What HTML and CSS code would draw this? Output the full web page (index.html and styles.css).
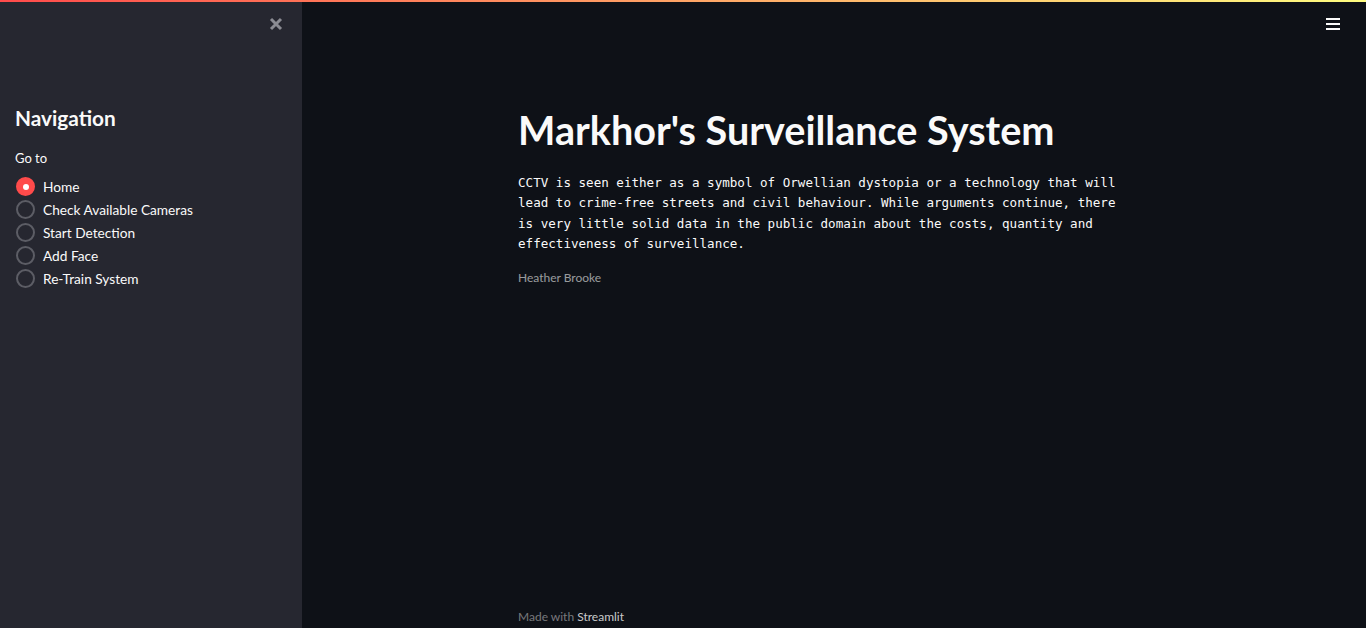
FILE: index.html
```html
<!DOCTYPE html>
<html>
<head>
<meta charset="utf-8">
<link rel="stylesheet" href="styles.css">
</head>
<body>
<div class="decoration"></div>
<div class="app">
  <aside class="sidebar">
    <div class="sidebar-top">
      <button class="close-btn" aria-label="Close">
        <svg width="14" height="14" viewBox="0 0 14 14"><path d="M2 2 L12 12 M12 2 L2 12" stroke="#8b8c93" stroke-width="3" stroke-linecap="butt"/></svg>
      </button>
    </div>
    <h2 class="nav-title">Navigation</h2>
    <div class="radio-label">Go to</div>
    <div class="radio-group">
      <label class="radio selected"><span class="dot"></span><span>Home</span></label>
      <label class="radio"><span class="dot"></span><span>Check Available Cameras</span></label>
      <label class="radio"><span class="dot"></span><span>Start Detection</span></label>
      <label class="radio"><span class="dot"></span><span>Add Face</span></label>
      <label class="radio"><span class="dot"></span><span>Re-Train System</span></label>
    </div>
  </aside>
  <main class="main">
    <div class="topbar">
      <button class="menu-btn" aria-label="Menu">
        <svg width="14" height="12" viewBox="0 0 14 12"><path d="M0 1 H14 M0 6 H14 M0 11 H14" stroke="#fafafa" stroke-width="2"/></svg>
      </button>
    </div>
    <div class="content">
      <div class="block">
        <h1 class="title">Markhor's Surveillance System</h1>
        <p class="quote">CCTV is seen either as a symbol of Orwellian dystopia or a technology that will lead to crime-free streets and civil behaviour. While arguments continue, there is very little solid data in the public domain about the costs, quantity and effectiveness of surveillance.</p>
        <div class="caption">Heather Brooke</div>
      </div>
    </div>
    <footer class="footer">
      <div class="block">Made with <span class="brand">Streamlit</span></div>
    </footer>
  </main>
</div>
</body>
</html>
```
FILE: styles.css
```css
* { box-sizing: border-box; }
html, body { margin: 0; padding: 0; height: 100%; }
body {
  background: #0e1117;
  color: #fafafa;
  font-family: Lato, "Noto Sans", sans-serif;
  overflow: hidden;
}
.decoration {
  position: absolute;
  top: 0; left: 0; right: 0;
  height: 2px;
  background: linear-gradient(90deg, #ff4b4b, #fffd80);
  z-index: 5;
}
.app { display: flex; height: 628px; }
.sidebar {
  width: 302px;
  flex: none;
  background: #262730;
  padding: 0 16px 0 15px;
}
.sidebar-top {
  display: flex;
  justify-content: flex-end;
  height: 98px;
  padding-top: 17px;
}
.close-btn {
  background: none; border: 0; padding: 0;
  width: 14px; height: 14px;
  margin-right: 3px;
}
.close-btn svg { display: block; }
.nav-title {
  margin: 0;
  font-size: 20.8px;
  font-weight: 700;
  line-height: 40px;
}
.radio-label {
  font-size: 13px;
  margin-top: 12px;
  line-height: 16px;
}
.radio-group {
  display: flex;
  flex-direction: column;
  margin-top: 9px;
}
.radio {
  display: flex;
  align-items: center;
  height: 23px;
  font-size: 13.7px;
  gap: 8px;
}
.radio .dot {
  width: 19px; height: 19px;
  border-radius: 50%;
  border: 2px solid #5c5d65;
  margin-left: 1px;
  flex: none;
  display: flex;
  align-items: center;
  justify-content: center;
}
.radio.selected .dot {
  background: #ff4b4b;
  border-color: #ff4b4b;
}
.radio.selected .dot::after {
  content: "";
  width: 6px; height: 6px;
  border-radius: 50%;
  background: #fff;
}
.main {
  flex: 1;
  display: flex;
  flex-direction: column;
  position: relative;
}
.topbar {
  height: 50px;
  display: flex;
  justify-content: flex-end;
  padding: 18px 26px 0 0;
}
.menu-btn { background: none; border: 0; padding: 0; width: 14px; height: 12px; }
.menu-btn svg { display: block; }
.content {
  flex: 1;
  display: flex;
  justify-content: center;
  padding-top: 56px;
}
.block { width: 632px; }
.title {
  margin: 0;
  font-size: 39.6px;
  font-weight: 700;
  line-height: 48px;
}
.quote {
  font-family: "DejaVu Sans Mono", "Liberation Mono", monospace;
  font-size: 12.57px;
  line-height: 20.3px;
  max-width: 610px;
  margin: 19px 0 0;
}
.caption {
  margin-top: 16px;
  font-size: 12px;
  color: rgba(250,250,250,0.6);
}
.footer {
  display: flex;
  justify-content: center;
  height: 19px;
  font-size: 12px;
  color: rgba(250,250,250,0.45);
}
.brand { color: rgba(250,250,250,0.8); }
```
